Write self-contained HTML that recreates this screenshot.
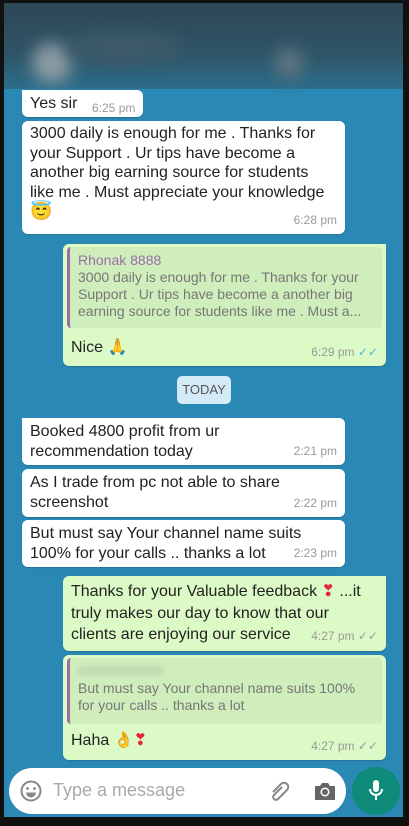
<!DOCTYPE html>
<html><head><meta charset="utf-8"><style>
*{margin:0;padding:0;box-sizing:border-box}
body{width:409px;height:826px;background:#111;overflow:hidden;position:relative;font-family:"Liberation Sans",sans-serif;color:#222}
#scr{position:absolute;left:4px;top:3px;width:399px;height:814px;background:#2a88b4;overflow:hidden}
#hdr{position:absolute;left:0;top:0;width:399px;height:86px;background:linear-gradient(#2e4756,#2f5567 60%,#2c6e8c);}
.blob{position:absolute;border-radius:50%;filter:blur(8px)}
.b{position:absolute;background:#fff;border-radius:6px;font-size:16px;line-height:19.5px;box-shadow:0 1px 1px rgba(0,0,0,.15)}
.g{background:#dcfac6}
.t{position:absolute;right:8px;bottom:4px;font-size:12px;color:#999}
.q{position:absolute;background:#cfeebc;border-left:3px solid #9a6fa8;border-radius:4px;font-size:14px;line-height:17px;color:#777;padding:5px 8px}
.ck{color:#4fb4e8}
</style></head><body>
<div id="scr">
<div id="hdr">
<div class="blob" style="left:28px;top:40px;width:40px;height:40px;background:#8c9ca4"></div>
<div class="blob" style="left:270px;top:45px;width:30px;height:30px;background:#5d7480"></div>
<div class="blob" style="left:60px;top:30px;width:120px;height:30px;background:#3d5a68"></div>
</div>
<div class="b" style="left:18px;top:87px;width:121px;height:27px;padding:4px 8px;border-top-left-radius:0">Yes sir<span style="position:absolute;left:70px;top:9px;font-size:12px;color:#999">6:25 pm</span></div>
<div class="b" style="left:18px;top:118px;width:323px;height:113px;padding:3px 14px 3px 8px">3000 daily is enough for me . Thanks for your Support . Ur tips have become a another big earning source for students like me . Must appreciate your knowledge<br><span style="font-size:18px">😇</span><span class="t">6:28 pm</span></div>
<div class="b g" style="left:59px;top:241px;width:323px;height:122px;border-top-right-radius:0">
<div class="q" style="left:4px;top:3px;width:315px;height:81px"><span style="color:#9a6fa8">Rhonak 8888</span><br>3000 daily is enough for me . Thanks for your Support . Ur tips have become a another big earning source for students like me . Must a...</div>
<div style="position:absolute;left:8px;top:94px">Nice 🙏</div>
<span class="t">6:29 pm <span class="ck">✓✓</span></span></div>
<div style="position:absolute;left:173px;top:373px;width:54px;height:28px;background:#d4ebf7;border-radius:5px;font-size:13px;color:#555;text-align:center;line-height:28px">TODAY</div>
<div class="b" style="left:18px;top:415px;width:323px;height:47px;padding:4px 8px;border-top-left-radius:0">Booked 4800 profit from ur recommendation today<span class="t">2:21 pm</span></div>
<div class="b" style="left:18px;top:466px;width:323px;height:48px;padding:4px 8px">As I trade from pc not able to share screenshot<span class="t">2:22 pm</span></div>
<div class="b" style="left:18px;top:517px;width:323px;height:47px;padding:4px 8px">But must say Your channel name suits 100% for your calls .. thanks a lot<span class="t">2:23 pm</span></div>
<div class="b g" style="left:59px;top:573px;width:323px;height:75px;padding:5px 8px;line-height:21.5px;border-top-right-radius:0">Thanks for your Valuable feedback <span style="color:#e0283c">❣</span> ...it truly makes our day to know that our clients are enjoying our service<span class="t">4:27 pm ✓✓</span></div>
<div class="b g" style="left:59px;top:652px;width:323px;height:105px">
<div class="q" style="left:4px;top:3px;width:315px;height:66px"><span style="display:inline-block;width:85px;height:10px;background:#c3dcb3;filter:blur(2px)"></span><br>But must say Your channel name suits 100% for your calls .. thanks a lot</div>
<div style="position:absolute;left:8px;top:76px">Haha 👌<span style="color:#e0283c">❣</span></div>
<span class="t">4:27 pm ✓✓</span></div>
<div style="position:absolute;left:5px;top:765px;width:337px;height:46px;background:#fff;border-radius:23px">
<svg style="position:absolute;left:11px;top:12px" width="22" height="22" viewBox="0 0 22 22"><circle cx="11" cy="11" r="9.5" fill="none" stroke="#888" stroke-width="2"/><circle cx="7.5" cy="8.5" r="1.4" fill="#888"/><circle cx="14.5" cy="8.5" r="1.4" fill="#888"/><path d="M6 12.5h10a5 5 0 0 1-10 0z" fill="#888"/></svg>
<div style="position:absolute;left:44px;top:12px;font-size:18px;color:#aaa">Type a message</div>
<svg style="position:absolute;left:260px;top:12px" width="24" height="22" viewBox="0 0 24 22"><path d="M4 12l8-8a4 4 0 0 1 6 6l-9 9a2.5 2.5 0 0 1-4-4l8-8" fill="none" stroke="#888" stroke-width="2"/></svg>
<svg style="position:absolute;left:304px;top:13px" width="24" height="20" viewBox="0 0 24 20"><path d="M2 5h5l2-3h6l2 3h5v14H2z" fill="#666"/><circle cx="12" cy="11" r="4.5" fill="#fff"/><circle cx="12" cy="11" r="3" fill="#666"/></svg>
</div>
<div style="position:absolute;left:348px;top:764px;width:48px;height:48px;border-radius:50%;background:#0e8a78">
<svg style="position:absolute;left:14px;top:12px" width="20" height="24" viewBox="0 0 20 24"><rect x="7" y="1" width="6" height="12" rx="3" fill="#fff"/><path d="M4 10a6 6 0 0 0 12 0" fill="none" stroke="#fff" stroke-width="2"/><path d="M10 16v5" stroke="#fff" stroke-width="2"/></svg>
</div>
</div>
</body></html>
